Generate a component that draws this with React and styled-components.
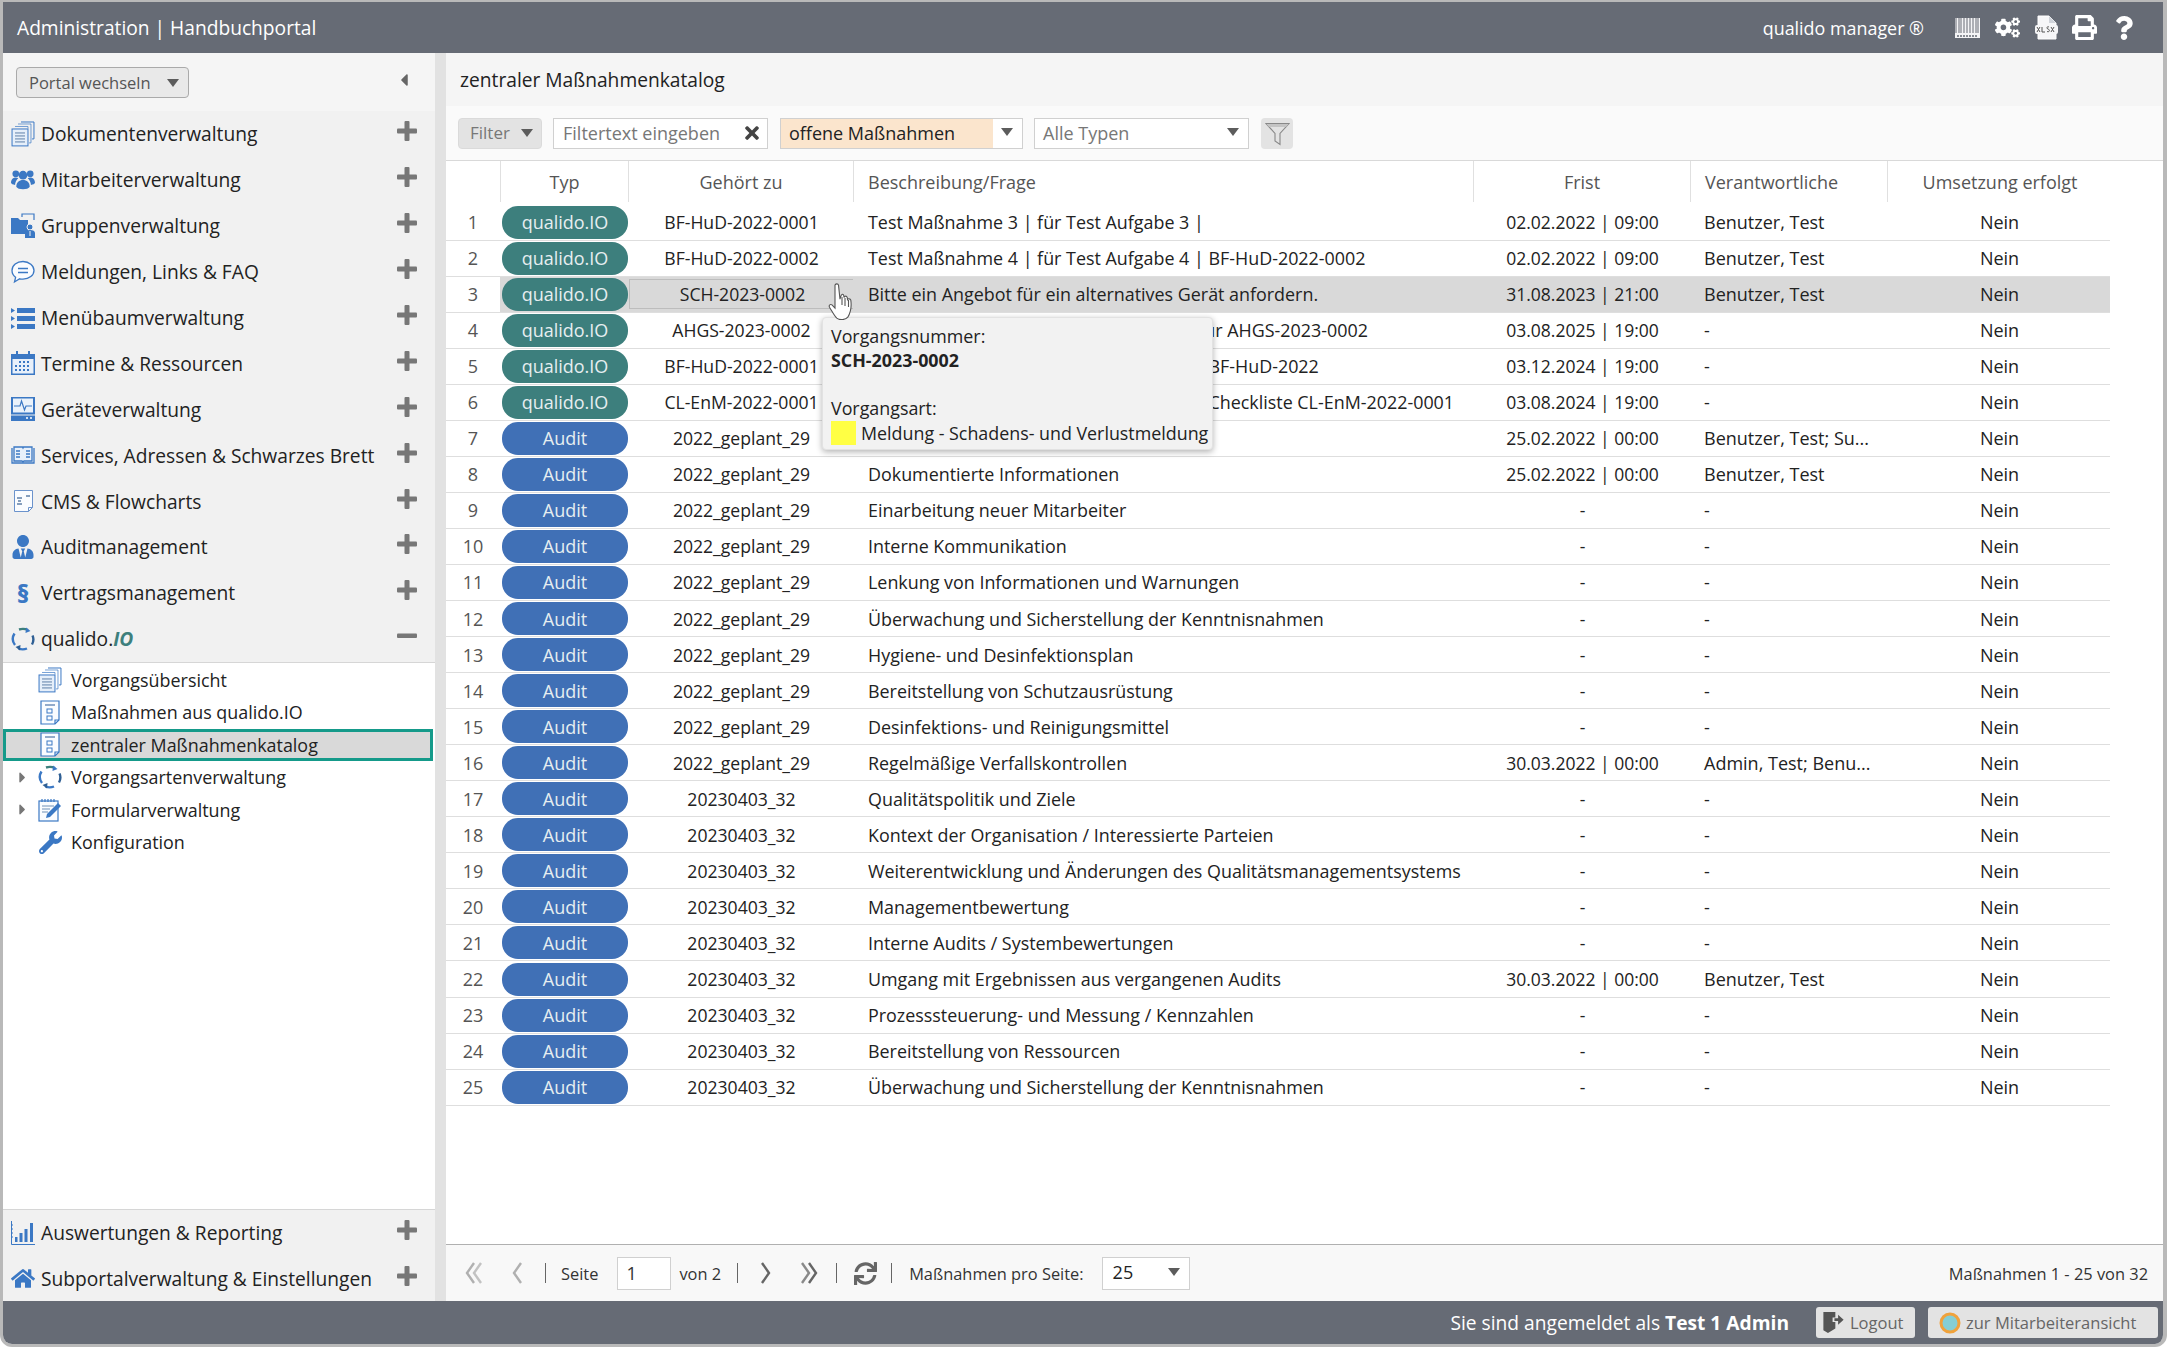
import React from "react";
import styled, { createGlobalStyle, css } from "styled-components";
import { FaUserTie, FaHome, FaWrench, FaCogs, FaPrint, FaQuestion, FaSync, FaTimes, FaCaretLeft, FaCaretRight } from "react-icons/fa";

const BLUE = "#3b78c4";
const FONT = `"Open Sans", "Noto Sans", sans-serif`;

const Global = createGlobalStyle`
  html, body { margin: 0; padding: 0; background: #fff; }
  body { font-family: ${FONT}; color: #222; }
  * { box-sizing: border-box; }
`;

const Win = styled.div`
  height: 1347px;
  width: 2167px;
  display: flex;
  flex-direction: column;
  border-style: solid;
  border-color: #b9b9b9;
  border-width: 2px 4px 3px 3px;
  border-radius: 0 0 12px 12px;
  overflow: hidden;
`;
const Header = styled.header`
  height: 51px;
  flex: none;
  background: #666b75;
  color: #fff;
  display: flex;
  align-items: center;
  padding: 0 0 0 14px;
`;
const HeaderTitle = styled.div`
  flex: 1;
  font-weight: 500;
  font-size: 19.2px;
`;
const HeaderBrand = styled.div`
  font-weight: 500;
  font-size: 17.9px;
  margin-right: 31px;
`;
const HeaderIcons = styled.div`
  display: flex;
  align-items: center;
  width: 208px;
  gap: 14.8px;
  color: #fff;
`;
const Body = styled.div`
  flex: 1;
  min-height: 0;
  display: flex;
`;
const Sidebar = styled.aside`
  width: 432px;
  flex: none;
  display: flex;
  flex-direction: column;
  background: #fff;
`;
const SideTop = styled.div`
  height: 58px;
  flex: none;
  background: #f5f5f5;
  display: flex;
  align-items: flex-start;
  justify-content: space-between;
  padding: 14px 21px 0 13px;
`;
const PortalButton = styled.div`
  width: 173px;
  height: 31px;
  border: 1px solid #aaa;
  border-radius: 4px;
  background: #e9e9e9;
  color: #555;
  font-size: 16.5px;
  display: flex;
  align-items: center;
  justify-content: space-between;
  padding: 0 9px 0 12px;
`;
const Caret = styled.span`
  width: 0;
  height: 0;
  flex: none;
  border-left: 6.5px solid transparent;
  border-right: 6.5px solid transparent;
  border-top: 8px solid #5c5c5c;
  margin-right: ${(p) => p.$mr ?? 0}px;
  margin-bottom: ${(p) => p.$mb ?? 0}px;
`;
const Collapse = styled.span`
  color: #666;
  font-size: 20px;
  line-height: 20px;
  margin-top: 3px;
`;
const NavItem = styled.div`
  height: 45.9px;
  flex: none;
  display: flex;
  align-items: center;
  background: #f1f1f1;
  font-size: 19.2px;
  color: #222;
  padding: 0 18px 0 8px;
`;
const IconSlot = styled.span`
  width: 24px;
  height: 26px;
  flex: none;
  display: flex;
  align-items: center;
  justify-content: center;
  color: ${BLUE};
  margin-right: 6px;
`;
const ParaIcon = styled.span`
  font-weight: 800;
  font-size: 25px;
  line-height: 26px;
  color: ${BLUE};
`;
const NavLabel = styled.span`
  flex: 1;
  white-space: nowrap;
`;
const IoMark = styled.em`
  color: #3d7f7d;
  font-weight: 700;
  font-style: italic;
`;
const PlusBox = styled.span`
  color: #777;
  display: flex;
  margin-top: -5px;
`;
const Tree = styled.div`
  flex: 1;
  border-top: 1px solid #d6d6d6;
  padding-top: 1px;
  background: #fff;
`;
const TreeRow = styled.div`
  height: 32.5px;
  display: flex;
  align-items: center;
  font-size: 17.9px;
  color: #222;
  padding-left: 17px;
  ${(p) =>
    p.$active &&
    css`
      margin-right: 2px;
      background: #d9d9d9;
      outline: 3px solid #159a8a;
      outline-offset: -3px;
    `}
`;
const Expander = styled.span`
  width: 18px;
  flex: none;
  color: #777;
  display: flex;
  font-size: 17px;
  margin-left: -6px;
  margin-right: 6px;
`;
const TreeIcon = styled(IconSlot)`
  margin-right: 9px;
`;
const SideBottom = styled.div`
  flex: none;
  border-top: 1px solid #d6d6d6;
  & > div { height: 45.5px; }
`;
const Divider = styled.div`
  width: 11px;
  flex: none;
  background: #e2e2e2;
`;
const Main = styled.main`
  flex: 1;
  min-width: 0;
  display: flex;
  flex-direction: column;
  background: #fff;
`;
const TitleBar = styled.div`
  height: 53px;
  flex: none;
  background: #f5f5f5;
  display: flex;
  align-items: center;
  padding-left: 14px;
  font-size: 19.2px;
  color: #222;
`;
const FilterBar = styled.div`
  height: 54px;
  flex: none;
  background: #fafafa;
  display: flex;
  align-items: flex-start;
  padding: 12px 0 0 12px;
`;
const FilterButton = styled.div`
  width: 84px;
  height: 31px;
  background: #e3e3e3;
  border: 1px solid #dadada;
  border-radius: 4px;
  color: #777;
  font-size: 17px;
  display: flex;
  align-items: center;
  justify-content: space-between;
  padding: 0 8px 2px 11px;
  margin-right: 11px;
`;
const FilterInput = styled.div`
  width: 215px;
  height: 31px;
  background: #fff;
  border: 1px solid #d0d0d0;
  color: #777;
  font-size: 18px;
  display: flex;
  align-items: center;
  justify-content: space-between;
  padding: 0 5px 2px 9px;
  margin-right: 12px;
  svg { color: #444; }
`;
const SelectBox = styled.div`
  width: ${(p) => p.$w}px;
  height: ${(p) => p.$h || 31}px;
  background: #fff;
  border: 1px solid #d0d0d0;
  font-size: 18px;
  color: ${(p) => p.$color || "#777"};
  display: flex;
  align-items: center;
  justify-content: space-between;
  margin-left: ${(p) => p.$ml || 0}px;
  margin-right: ${(p) => p.$mr || 0}px;
`;
const SelectFill = styled.span`
  width: 212px;
  height: 100%;
  background: #fbe5cd;
  display: flex;
  align-items: center;
  padding: 0 0 2px 8px;
`;
const SelectText = styled.span`
  padding: 0 0 2px ${(p) => p.$pl ?? 8}px;
`;
const FunnelButton = styled.div`
  width: 32px;
  height: 31px;
  margin-left: 12px;
  background: #e3e3e3;
  border-radius: 4px;
  display: flex;
  align-items: center;
  justify-content: center;
`;
const Grid = css`
  display: grid;
  grid-template-columns: 54px 128px 225px 620px 217px 197px 223px;
`;
const HeadRow = styled.div`
  ${Grid}
  height: 44.5px;
  flex: none;
  border-top: 1px solid #d9d9d9;
  align-items: stretch;
  padding-bottom: 2.5px;
`;
const HeadCell = styled.div`
  display: flex;
  align-items: center;
  justify-content: ${(p) => (p.$left ? "flex-start" : "center")};
  padding-left: ${(p) => (p.$left ? "14px" : p.$pl || "0")};
  border-left: ${(p) => (p.$noline ? "none" : "1px solid #e0e0e0")};
  font-size: 18px;
  color: #555;
`;
const RowsArea = styled.div`
  flex: 1;
  position: relative;
  min-height: 0;
`;
const Row = styled.div`
  ${Grid}
  height: 36.05px;
  border-bottom: 1px solid #dedede;
  align-items: center;
  font-size: 18px;
  color: #222;
  width: 1664px;
  white-space: nowrap;
`;
const NumCell = styled.div`
  text-align: center;
  color: #555;
`;
const TypeCell = styled.div`
  height: 100%;
  display: flex;
  align-items: center;
  ${(p) => p.$hl && "background: #d9d9d9;"}
`;
const Pill = styled.div`
  width: 126px;
  height: 33px;
  margin-left: 2px;
  border-radius: 16px;
  background: ${(p) => (p.$audit ? "#4070b6" : "#3d7f7d")};
  color: #e6eef0;
  display: flex;
  align-items: center;
  justify-content: center;
`;
const Cell = styled.div`
  height: 100%;
  display: flex;
  align-items: center;
  overflow: hidden;
  justify-content: ${(p) => (p.$left ? "flex-start" : "center")};
  padding-left: ${(p) => (p.$left ? "15px" : p.$pl || "0")};
  ${(p) => p.$hl && "background: #d9d9d9;"}
`;
const DescCell = styled(Cell)`
  font-size: 17.9px;
`;
const DateCell = styled(Cell)`
  font-size: 17.5px;
  padding-left: 2px;
`;
const PersonCell = styled(Cell)`
  padding-left: 14px;
`;
const RefCell = styled(Cell)`
  font-size: 17.6px;
  padding-left: 2px;
  ${(p) => p.$hl && "border: 1px solid #bdbdbd; margin: 2px -1px 3px 1px; height: calc(100% - 5px);"}
`;
const RefWrap = styled.div`
  height: 100%;
  ${(p) => p.$hl && "background: #d9d9d9;"}
`;
const Tooltip = styled.div`
  position: absolute;
  left: 376px;
  top: 112.5px;
  width: 391px;
  height: 133px;
  z-index: 5;
  background: #f2f2f2;
  border: 1px solid #e2e2e2;
  border-radius: 4px;
  box-shadow: 0 2px 6px rgba(0, 0, 0, 0.3);
  padding: 6px 8px;
  font-size: 17.85px;
  line-height: 24.4px;
  color: #222;
  white-space: nowrap;
`;
const TipStrong = styled.div`
  font-weight: 700;
  margin-bottom: 23px;
`;
const TipKind = styled.div`
  display: flex;
  align-items: center;
  margin-top: 1px;
`;
const Swatch = styled.span`
  width: 25px;
  height: 24px;
  flex: none;
  background: #ffff44;
  margin-right: 5px;
`;
const Cursor = styled.svg`
  position: absolute;
  left: 382px;
  top: 78px;
  z-index: 6;
`;
const Pager = styled.div`
  height: 57px;
  flex: none;
  background: #f8f8f8;
  border-top: 1px solid #b0b0b0;
  display: flex;
  align-items: center;
  padding: 0 15px 0 19px;
  font-size: 16.4px;
  color: #333;
`;
const PagerBtn = styled.span`
  display: flex;
  align-items: center;
  justify-content: center;
  flex: none;
  width: ${(p) => p.$w || 20}px;
  margin-right: ${(p) => p.$mr || 0}px;
  color: ${(p) => (p.$off ? "#b0b0b0" : "#666")};
`;
const PagerSep = styled.span`
  width: 1px;
  height: 20px;
  flex: none;
  background: #666;
  margin: 0 ${(p) => p.$r ?? 16}px 0 ${(p) => p.$l ?? 14}px;
`;
const PageInput = styled.div`
  width: 54px;
  height: 33px;
  background: #fff;
  border: 1px solid #d0d0d0;
  display: flex;
  align-items: center;
  padding-left: 8px;
  font-size: 18px;
  margin: 0 8px 0 19px;
`;
const PagerRight = styled.div`
  margin-left: auto;
`;
const Footer = styled.footer`
  height: 43px;
  flex: none;
  background: #666b75;
  color: #fff;
  display: flex;
  align-items: center;
  justify-content: flex-end;
  padding-right: 5px;
  font-size: 19.2px;
`;
const FootBtn = styled.div`
  height: 31px;
  width: ${(p) => p.$w}px;
  margin-left: ${(p) => p.$ml}px;
  padding-left: ${(p) => p.$pl}px;
  background: #e3e3e3;
  border-radius: 3px;
  color: #666;
  font-size: 16.5px;
  display: flex;
  align-items: center;
  gap: 5px;
`;

/* ---- drawn icons ---- */
const Plus = () => (
  <svg width="20" height="20" viewBox="0 0 20 20" fill="currentColor">
    <rect x="7.500" y="0" width="5" height="20" rx="1" />
    <rect x="0" y="7.500" width="20" height="5" rx="1" />
  </svg>
);
const Minus = () => (
  <svg width="20" height="20" viewBox="0 0 20 20" fill="currentColor">
    <rect x="0" y="7.500" width="20" height="4.500" rx="1" />
  </svg>
);
const Chevron = ({ dir, double }) => {
  const d = dir === "l";
  const one = (x) => (d ? `M${x + 9} 2L${x + 2} 12l7 10` : `M${x + 2} 2l7 10L${x + 2} 22`);
  return (
    <svg width={double ? 19 : 13} height="24" viewBox={`0 0 ${double ? 19 : 13} 24`} fill="none" stroke="currentColor" strokeWidth="2.400">
      <path d={one(double ? (d ? 0 : 7) : 1)} />
      {double && <path d={one(d ? 7 : 0)} opacity=".75" />}
    </svg>
  );
};
const People = () => (
  <svg width="25" height="21" viewBox="0 0 25 21" fill={BLUE}>
    <circle cx="5" cy="4.500" r="3.500" />
    <circle cx="20" cy="4.500" r="3.500" />
    <circle cx="12.500" cy="6" r="4.500" />
    <path d="M0 14c0-3.200 2-5.500 5-5.500 1 0 2 .3 2.600.8C5.600 11 4.400 13.500 4.200 16.200 2 16 .3 15.200 0 14z" />
    <path d="M25 14c0-3.200-2-5.500-5-5.500-1 0-2 .3-2.600.8 2 1.700 3.200 4.200 3.400 6.900 2.200-.2 3.900-1 4.200-2.200z" />
    <path d="M5.500 18c0-4.500 3-7 7-7s7 2.500 7 7c-1.500 3.500-12.500 3.500-14 0z" />
  </svg>
);
const Docs = ({ s = 24 }) => (
  <svg width={s} height={s * 1.08} viewBox="0 0 24 26" fill="none" stroke={BLUE} strokeWidth="1">
    <path d="M10 1h13v17h-2" />
    <path d="M7 3h13v19h-2" opacity=".7" />
    <path d="M4 5.500h13v2" opacity=".7" />
    <rect x="1" y="8" width="16" height="17" fill="#e6effa" />
    <path d="M4 12h10M4 15h10M4 18h10M4 21h10" stroke="#5f7fa8" />
  </svg>
);
const Folder = () => (
  <svg width="24" height="26" viewBox="0 0 24 26">
    <path d="M0 5h7l2 2h8v14H0z" fill={BLUE} />
    <path d="M11 4V1h12v6" fill="none" stroke={BLUE} strokeWidth="1.200" />
    <circle cx="19" cy="14" r="3" fill={BLUE} stroke="#f1f1f1" />
    <path d="M14 25v-5c0-2 2-3 5-3s5 1 5 3v5z" fill={BLUE} />
    <path d="M19 18v5" stroke="#f1f1f1" />
  </svg>
);
const Bubble = () => (
  <svg width="24" height="24" viewBox="0 0 24 24" fill="none" stroke={BLUE} strokeWidth="1.300">
    <path d="M12 1.500C5.800 1.500 1 5.400 1 10.500c0 2.800 1.400 5.200 3.600 6.800L3.500 22l5.200-3.200c1 .2 2.100.3 3.300.3 6.200 0 11-3.900 11-8.600S18.200 1.500 12 1.500z" fill="#fafcff" />
    <path d="M7 8.500h10M7 12.500h10" />
  </svg>
);
const ListIcon = () => (
  <svg width="24" height="22" viewBox="0 0 24 22" fill={BLUE}>
    <path d="M0 1l4 2.500L0 6zM0 9l4 2.500L0 14zM0 17l4 2.500L0 22z" />
    <rect x="6" y="1" width="18" height="5" />
    <rect x="6" y="9" width="18" height="5" />
    <rect x="6" y="17" width="18" height="5" />
  </svg>
);
const Calendar = () => (
  <svg width="24" height="24" viewBox="0 0 24 24">
    <rect x="0" y="3" width="24" height="21" fill={BLUE} />
    <rect x="1.500" y="8" width="21" height="14.500" fill="#e8f0fa" />
    <rect x="5" y="0" width="2" height="5" fill={BLUE} />
    <rect x="17" y="0" width="2" height="5" fill={BLUE} />
    <path d="M8 10h2v2H8zM12 10h2v2h-2zM16 10h2v2h-2zM4 14h2v2H4zM8 14h2v2H8zM12 14h2v2h-2zM16 14h2v2h-2zM4 18h2v2H4zM8 18h2v2H8zM12 18h2v2h-2zM16 18h2v2h-2z" fill={BLUE} />
  </svg>
);
const Device = () => (
  <svg width="24" height="24" viewBox="0 0 24 24">
    <rect x="1" y="0.500" width="22" height="16" fill="#eaf2fb" stroke={BLUE} strokeWidth="2" />
    <path d="M3 9h6l1.500-5 3 9 1.500-4h6" fill="none" stroke={BLUE} strokeWidth="1.200" />
    <rect x="0" y="18.500" width="24" height="5.500" fill={BLUE} />
    <path d="M15 21h2M19 21h2" stroke="#fff" strokeWidth="1.500" />
  </svg>
);
const Book = () => (
  <svg width="24" height="20" viewBox="0 0 24 20" fill="#e8f0fa" stroke={BLUE} strokeWidth="1.300">
    <path d="M1 3v15h22V3" fill="none" />
    <path d="M3 2h8.500l.5 1 .5-1H21v14h-8l-1 1-1-1H3z" />
    <path d="M5 6h4M5 9h4M5 12h4M15 6h4M15 9h4M15 12h4" strokeWidth="1.500" />
  </svg>
);
const Cms = () => (
  <svg width="22" height="24" viewBox="0 0 22 24" fill="#fafcff" stroke="#6b93cc" strokeWidth="1">
    <path d="M2.500 1.500h18v17l-4 4h-14z" />
    <path d="M5 9h5M6 12h3M5 15h5M14 7h4" stroke="#5f7fa8" strokeWidth="1.300" />
    <path d="M16.500 22.500v-4h4" fill="none" />
  </svg>
);
const Cycle = () => (
  <svg width="24" height="24" viewBox="0 0 24 24" fill="none" stroke={BLUE} strokeWidth="2.400">
    <path d="M4 18A10 10 0 0 1 3.500 6.500" />
    <path d="M8 2.500c3-1 6-.9 9 .5" stroke="#3d7f7d" />
    <path d="M21.500 8.500a10 10 0 0 1-.5 9" stroke="#2f5f94" />
    <path d="M16 21.500c-3 1.200-6 1-8.500 0" />
    <path d="M15 .5l4.500 3.500-5 2z" fill={BLUE} stroke="none" />
    <path d="M9 23.500l-4.500-3.500 5-2z" fill="#2f5f94" stroke="none" />
  </svg>
);
const Measure = () => (
  <svg width="20" height="25" viewBox="0 0 20 25" fill="#fafcff" stroke={BLUE} strokeWidth="1.200">
    <path d="M1 1h18v19l-4 4H1z" />
    <path d="M5 5h10" stroke="#6f8fb8" strokeWidth="1.500" />
    <rect x="7" y="9" width="5" height="4" strokeWidth="1" />
    <rect x="7" y="16" width="5" height="4" strokeWidth="1" />
    <path d="M15 24v-4h4" fill="none" />
  </svg>
);
const FormIcon = () => (
  <svg width="24" height="24" viewBox="0 0 24 24" fill="#fafcff" stroke={BLUE} strokeWidth="1.200">
    <rect x="1" y="3" width="19" height="20" />
    <path d="M4 1v3M7 1v3M10 1v3M13 1v3M16 1v3" />
    <path d="M4 8h12M4 11h8M4 14h6" stroke="#6f8fb8" />
    <path d="M8 20l1-4L20 5l3 3-11 11z" fill={BLUE} stroke="none" />
  </svg>
);
const Chart = () => (
  <svg width="24" height="24" viewBox="0 0 24 24" fill={BLUE}>
    <path d="M.5 0v23.500H24" fill="none" stroke={BLUE} strokeWidth="1" />
    <path d="M0 4h2M0 8h2M0 12h2M0 16h2" stroke={BLUE} />
    <rect x="4" y="16" width="2.500" height="5" />
    <rect x="8.500" y="12" width="3" height="9" />
    <rect x="13.500" y="8" width="3" height="13" />
    <rect x="19" y="2" width="3" height="19" />
  </svg>
);
const Barcode = () => (
  <svg width="25" height="20" viewBox="0 0 25 20">
    <rect width="25" height="20" fill="#f4f4f6" />
    <path d="M1 0v15M4 0v15M6 0v15M9 0v15M12 0v15M15 0v15M18 0v15M21 0v15M23 0v15" stroke="#666b75" strokeWidth="1" />
    <path d="M2 18h21" stroke="#666b75" strokeWidth="1.500" strokeDasharray="2 1" />
  </svg>
);
const Xlsx = () => (
  <svg width="23" height="25" viewBox="0 0 23 25">
    <path d="M3 1h11l7 7v16H3z" fill="#f6f6f8" stroke="#fff" />
    <path d="M14 1v7h7" fill="#cfd3da" />
    <rect x="0" y="10" width="23" height="9" rx="2" fill="#f6f6f8" />
    <path d="M2 12l3 5M5 12l-3 5M7 12v5h3M12 16.500c3 1 3-2 1-2.500s-1-3 1-2M16 12l3 5M19 12l-3 5" stroke="#555" strokeWidth="1" fill="none" />
  </svg>
);
const Funnel = () => (
  <svg width="25" height="24" viewBox="0 0 25 24" fill="none" stroke="#888" strokeWidth="1.100">
    <path d="M1 1.500h23l-9 10v11l-5-3.500v-7.500z" />
    <path d="M1.500 2h22l-2.500 3H4z" fill="#c4c4c4" stroke="none" />
  </svg>
);
const Hand = () => (
  <Cursor width="26" height="37" viewBox="0 0 26 37" fill="#fff" stroke="#555" strokeWidth="1.100">
    <path d="M7 2c1-1.500 3-1.500 3.500.2l1.500 14c.5-2 1-5 2.500-5 1.500 0 1.500 1.800 1.500 3.300 .5-1.800 2.800-1.800 3.200 0 .2.800.2 1.200.3 2 .5-1 2.800-1 3.300.7 1 7-.5 13-3 17-2 2.500-8 3.500-11 1-3-3-4.800-7-7.300-11-1-2 .9-3.300 2.500-2.300l3 3.200z" />
    <path d="M14 14v8M17 15v8M20.500 17v7" />
  </Cursor>
);
const Door = () => (
  <svg width="23" height="23" viewBox="0 0 24 25" fill="#555">
    <path d="M1 1h13v6h-3v5h3v7l-8 5-5-3z" />
    <path d="M13 8h4V4l6 5.500-6 5.500v-4h-4z" />
  </svg>
);
const Ring = () => (
  <svg width="22" height="22" viewBox="0 0 22 22">
    <circle cx="11" cy="11" r="9" fill="#85ced4" stroke="#f0a23c" strokeWidth="3" />
  </svg>
);

const NAV = [
  ["Dokumentenverwaltung", <Docs />],
  ["Mitarbeiterverwaltung", <People />],
  ["Gruppenverwaltung", <Folder />],
  ["Meldungen, Links & FAQ", <Bubble />],
  ["Menübaumverwaltung", <ListIcon />],
  ["Termine & Ressourcen", <Calendar />],
  ["Geräteverwaltung", <Device />],
  ["Services, Adressen & Schwarzes Brett", <Book />],
  ["CMS & Flowcharts", <Cms />],
  ["Auditmanagement", <FaUserTie size={24} />],
  ["Vertragsmanagement", <ParaIcon>§</ParaIcon>],
];

const Q = "qualido.IO";
const A = "Audit";
const G = "2022_geplant_29";
const N = "20230403_32";
const BT = "Benutzer, Test";
const ROWS = [
  [Q, "BF-HuD-2022-0001", "Test Maßnahme 3 | für Test Aufgabe 3 |", "02.02.2022 | 09:00", BT],
  [Q, "BF-HuD-2022-0002", "Test Maßnahme 4 | für Test Aufgabe 4 | BF-HuD-2022-0002", "02.02.2022 | 09:00", BT],
  [Q, "SCH-2023-0002", "Bitte ein Angebot für ein alternatives Gerät anfordern.", "31.08.2023 | 21:00", BT],
  [Q, "AHGS-2023-0002", "Test Maßnahme 5 | für Test Aufgabe. | für AHGS-2023-0002", "03.08.2025 | 19:00", "-"],
  [Q, "BF-HuD-2022-0001", "Test Maßnahme 5 | für Test Aufgabe 5 | BF-HuD-2022", "03.12.2024 | 19:00", "-"],
  [Q, "CL-EnM-2022-0001", "Test Maßnahme 6 | für Test Aufgabe 6 | Checkliste CL-EnM-2022-0001", "03.08.2024 | 19:00", "-"],
  [A, G, "", "25.02.2022 | 00:00", "Benutzer, Test; Su..."],
  [A, G, "Dokumentierte Informationen", "25.02.2022 | 00:00", BT],
  [A, G, "Einarbeitung neuer Mitarbeiter", "-", "-"],
  [A, G, "Interne Kommunikation", "-", "-"],
  [A, G, "Lenkung von Informationen und Warnungen", "-", "-"],
  [A, G, "Überwachung und Sicherstellung der Kenntnisnahmen", "-", "-"],
  [A, G, "Hygiene- und Desinfektionsplan", "-", "-"],
  [A, G, "Bereitstellung von Schutzausrüstung", "-", "-"],
  [A, G, "Desinfektions- und Reinigungsmittel", "-", "-"],
  [A, G, "Regelmäßige Verfallskontrollen", "30.03.2022 | 00:00", "Admin, Test; Benu..."],
  [A, N, "Qualitätspolitik und Ziele", "-", "-"],
  [A, N, "Kontext der Organisation / Interessierte Parteien", "-", "-"],
  [A, N, "Weiterentwicklung und Änderungen des Qualitätsmanagementsystems", "-", "-"],
  [A, N, "Managementbewertung", "-", "-"],
  [A, N, "Interne Audits / Systembewertungen", "-", "-"],
  [A, N, "Umgang mit Ergebnissen aus vergangenen Audits", "30.03.2022 | 00:00", BT],
  [A, N, "Prozesssteuerung- und Messung / Kennzahlen", "-", "-"],
  [A, N, "Bereitstellung von Ressourcen", "-", "-"],
  [A, N, "Überwachung und Sicherstellung der Kenntnisnahmen", "-", "-"],
];

const Nav = ({ label, icon, minus }) => (
  <NavItem>
    <IconSlot>{icon}</IconSlot>
    <NavLabel>{label}</NavLabel>
    <PlusBox>{minus ? <Minus /> : <Plus />}</PlusBox>
  </NavItem>
);

export default function App() {
  return (
    <Win>
      <Global />
      <Header>
        <HeaderTitle>Administration | Handbuchportal</HeaderTitle>
        <HeaderBrand>qualido manager ®</HeaderBrand>
        <HeaderIcons>
          <Barcode />
          <FaCogs size={25} />
          <Xlsx />
          <FaPrint size={25} />
          <FaQuestion size={24} />
        </HeaderIcons>
      </Header>
      <Body>
        <Sidebar>
          <SideTop>
            <PortalButton>
              Portal wechseln <Caret />
            </PortalButton>
            <Collapse><FaCaretLeft /></Collapse>
          </SideTop>
          {NAV.map(([l, i]) => (
            <Nav key={l} label={l} icon={i} />
          ))}
          <Nav label={<>qualido.<IoMark>IO</IoMark></>} icon={<Cycle />} minus />
          <Tree>
            <TreeRow><Expander /><TreeIcon><Docs /></TreeIcon>Vorgangsübersicht</TreeRow>
            <TreeRow><Expander /><TreeIcon><Measure /></TreeIcon>Maßnahmen aus qualido.IO</TreeRow>
            <TreeRow $active><Expander /><TreeIcon><Measure /></TreeIcon>zentraler Maßnahmenkatalog</TreeRow>
            <TreeRow><Expander><FaCaretRight /></Expander><TreeIcon><Cycle /></TreeIcon>Vorgangsartenverwaltung</TreeRow>
            <TreeRow><Expander><FaCaretRight /></Expander><TreeIcon><FormIcon /></TreeIcon>Formularverwaltung</TreeRow>
            <TreeRow><Expander /><TreeIcon><FaWrench size={23} /></TreeIcon>Konfiguration</TreeRow>
          </Tree>
          <SideBottom>
            <Nav label="Auswertungen & Reporting" icon={<Chart />} />
            <Nav label="Subportalverwaltung & Einstellungen" icon={<FaHome size={25} />} />
          </SideBottom>
        </Sidebar>
        <Divider />
        <Main>
          <TitleBar>zentraler Maßnahmenkatalog</TitleBar>
          <FilterBar>
            <FilterButton>Filter <Caret /></FilterButton>
            <FilterInput>Filtertext eingeben <FaTimes size={20} /></FilterInput>
            <SelectBox $w={243} $mr={11} $color="#222">
              <SelectFill>offene Maßnahmen</SelectFill>
              <Caret $mr={9} $mb={3} />
            </SelectBox>
            <SelectBox $w={215}>
              <SelectText>Alle Typen</SelectText>
              <Caret $mr={9} $mb={3} />
            </SelectBox>
            <FunnelButton><Funnel /></FunnelButton>
          </FilterBar>
          <HeadRow>
            <HeadCell $noline />
            <HeadCell>Typ</HeadCell>
            <HeadCell>Gehört zu</HeadCell>
            <HeadCell $left>Beschreibung/Frage</HeadCell>
            <HeadCell>Frist</HeadCell>
            <HeadCell $left>Verantwortliche</HeadCell>
            <HeadCell $pl="2px">Umsetzung erfolgt</HeadCell>
          </HeadRow>
          <RowsArea>
            {ROWS.map((r, i) => {
              const hl = i === 2;
              return (
                <Row key={i}>
                  <NumCell>{i + 1}</NumCell>
                  <TypeCell $hl={hl}><Pill $audit={r[0] === A}>{r[0]}</Pill></TypeCell>
                  <RefWrap $hl={hl}><RefCell $hl={hl}>{r[1]}</RefCell></RefWrap>
                  <DescCell $left $hl={hl}>{r[2]}</DescCell>
                  <DateCell $hl={hl}>{r[3]}</DateCell>
                  <PersonCell $left $hl={hl}>{r[4]}</PersonCell>
                  <Cell $hl={hl} $pl="2px">Nein</Cell>
                </Row>
              );
            })}
            <Hand />
            <Tooltip>
              <div>Vorgangsnummer:</div>
              <TipStrong>SCH-2023-0002</TipStrong>
              <div>Vorgangsart:</div>
              <TipKind><Swatch />Meldung - Schadens- und Verlustmeldung</TipKind>
            </Tooltip>
          </RowsArea>
          <Pager>
            <PagerBtn $off $w={19} $mr={27}><Chevron dir="l" double /></PagerBtn>
            <PagerBtn $off $w={13}><Chevron dir="l" /></PagerBtn>
            <PagerSep $l={21} $r={15} />
            Seite
            <PageInput>1</PageInput>
            von 2
            <PagerSep $l={16} $r={21} />
            <PagerBtn $w={13} $mr={28}><Chevron dir="r" /></PagerBtn>
            <PagerBtn $w={19}><Chevron dir="r" double /></PagerBtn>
            <PagerSep $l={17} $r={16} />
            <PagerBtn $w={24}><FaSync size={23} /></PagerBtn>
            <PagerSep $l={14} $r={17} />
            Maßnahmen pro Seite:
            <SelectBox $w={88} $h={33} $ml={18} $color="#222">
              <SelectText $pl={10}>25</SelectText>
              <Caret $mr={9} $mb={3} />
            </SelectBox>
            <PagerRight>Maßnahmen 1 - 25 von 32</PagerRight>
          </Pager>
        </Main>
      </Body>
      <Footer>
        <span>Sie sind angemeldet als <b>Test 1 Admin</b></span>
        <FootBtn $w={99} $ml={27} $pl={6}><Door />Logout</FootBtn>
        <FootBtn $w={230} $ml={13} $pl={11}><Ring />zur Mitarbeiteransicht</FootBtn>
      </Footer>
    </Win>
  );
}
